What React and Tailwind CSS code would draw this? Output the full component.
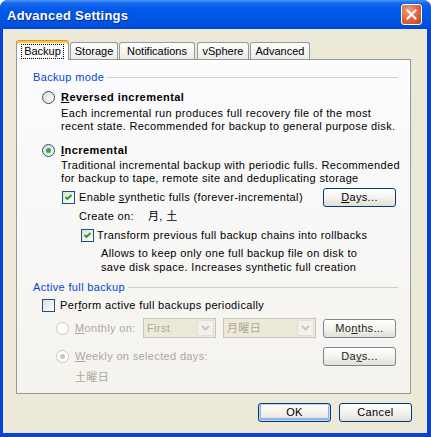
import React from 'react';

const font = "font-['Liberation_Sans','Noto_Sans_CJK_JP',sans-serif]";

const Radio = ({ checked, disabled }) => (
  <span
    className={`w-[13px] h-[13px] rounded-full border flex items-center justify-center shrink-0 ${
      disabled ? 'border-[#CAC8BB] bg-white' : 'border-[#1C5180] bg-linear-to-br from-[#DCDCD7] to-white'
    }`}
  >
    {checked && (
      <span className={`w-[5px] h-[5px] rounded-full ${disabled ? 'bg-[#CAC8BB]' : 'bg-[#36A936]'}`} />
    )}
  </span>
);

const Check = ({ checked }) => (
  <span className="w-[13px] h-[13px] border border-[#1C5180] bg-linear-to-br from-[#DCDCD7] to-white flex items-center justify-center shrink-0">
    {checked && (
      <svg width="9" height="9" viewBox="0 0 9 9">
        <path d="M1.5 4 L3.5 6 L7.5 2" stroke="#21A121" strokeWidth="1.8" fill="none" />
      </svg>
    )}
  </span>
);

const Btn = ({ children, border = 'border-[#003C74]', extra = '' }) => (
  <div
    className={`h-[19px] w-[73px] rounded-[3px] border ${border} bg-linear-to-b from-white via-[#F4F3EE] to-[#E2DFD4] flex items-center justify-center shrink-0 ${extra}`}
  >
    {children}
  </div>
);

const Combo = ({ value, width }) => (
  <div className={`${width} h-[20px] border border-[#C9C7BA] bg-[#ECE9D8] flex items-center justify-between pl-[3px] text-[#ACA899] shrink-0`}>
    <span>{value}</span>
    <span className="w-[17px] h-[16px] mr-[1px] bg-[#F2F1EC] border border-[#E2E0D6] rounded-[2px] flex items-center justify-center">
      <svg width="9" height="6" viewBox="0 0 9 6">
        <path d="M1 1 L4.5 4.5 L8 1" stroke="#C9C7BA" strokeWidth="2" fill="none" />
      </svg>
    </span>
  </div>
);

const Group = ({ label }) => (
  <div className="flex items-center ml-[16px] mr-[12px] h-[13px] text-[#0046D5]">
    <span>{label}</span>
    <span className="flex-1 h-px bg-[#D0D0BF] ml-[3px]" />
  </div>
);

const tabs = [
  { name: 'Storage', w: 'w-[48px]', ml: 'ml-[1px]' },
  { name: 'Notifications', w: 'w-[76px]', ml: 'ml-[1px]' },
  { name: 'vSphere', w: 'w-[52px]', ml: 'ml-[2px]' },
  { name: 'Advanced', w: 'w-[60px]', ml: 'ml-[1px]' },
];

export default function App() {
  return (
    <div className={`w-[431px] h-[437px] flex flex-col bg-[#0842D8] rounded-t-[8px] overflow-hidden text-[11px] leading-[13px] tracking-[0.35px] text-black ${font}`}>
      {/* Title bar */}
      <div className="h-[29px] shrink-0 flex items-center justify-between pl-[7px] pr-[9px] bg-[linear-gradient(to_bottom,#4C95F5_0%,#1466EE_12%,#0058E8_35%,#0054E3_80%,#0047D4_100%)]">
        <span className="text-white font-bold text-[13px] tracking-[0.25px] [text-shadow:1px_1px_0_#0A2A9C] pt-[2px]">Advanced Settings</span>
        <div className="w-[21px] h-[21px] rounded-[3px] border border-white bg-[radial-gradient(circle_at_35%_30%,#F0A285_0%,#DD6842_50%,#C2431E_100%)] flex items-center justify-center">
          <svg width="11" height="11" viewBox="0 0 11 11">
            <path d="M1.5 1.5 L9.5 9.5 M9.5 1.5 L1.5 9.5" stroke="white" strokeWidth="2" strokeLinecap="square" />
          </svg>
        </div>
      </div>

      {/* Client */}
      <div className="flex-1 ml-[3px] mr-[4px] mb-[4px] bg-[#ECE9D8] flex flex-col pt-[11px] pl-[13px]">
        {/* Tabs */}
        <div className="flex items-end h-[19px] tracking-normal">
          <div className="relative z-10 w-[53px] h-[20px] -mb-px rounded-t-[3px] border border-b-0 border-[#919B9C] border-t-[#E68B2C] shadow-[inset_0_2px_0_#FFC83C] bg-[#FCFCFE] flex justify-center pt-[3px]">
            <span className="border border-dotted border-black px-[2px] h-[15px] leading-[13px]">Backup</span>
          </div>
          {tabs.map((t) => (
            <div
              key={t.name}
              className={`${t.w} ${t.ml} h-[17px] rounded-t-[3px] border border-b-0 border-[#919B9C] bg-linear-to-b from-white to-[#ECEBE6] flex items-center justify-center pt-px`}
            >
              {t.name}
            </div>
          ))}
        </div>

        {/* Panel */}
        <div className="w-[395px] h-[335px] border border-[#919B9C] bg-linear-to-b from-[#FCFCFE] to-[#F4F3EE] flex flex-col">
          <div className="mt-[11px]">
            <Group label="Backup mode" />
          </div>

          <div className="flex items-center mt-[7px] ml-[25px] gap-[6px] font-bold tracking-[0.45px]">
            <Radio />
            <span>
              <u>R</u>eversed incremental
            </span>
          </div>
          <div className="mt-[3px] ml-[44px]">
            <div>Each incremental run produces full recovery file of the most</div>
            <div>recent state. Recommended for backup to general purpose disk.</div>
          </div>

          <div className="flex items-center mt-[11px] ml-[25px] gap-[6px] font-bold tracking-[0.45px]">
            <Radio checked />
            <span>
              <u>I</u>ncremental
            </span>
          </div>
          <div className="mt-[2px] ml-[44px]">
            <div>Traditional incremental backup with periodic fulls. Recommended</div>
            <div>for backup to tape, remote site and deduplicating storage</div>
          </div>

          <div className="flex items-center justify-between h-[19px] mt-[3px] ml-[45px] mr-[14px]">
            <div className="flex items-center gap-[4px]">
              <Check checked />
              <span>
                Enable <u>s</u>ynthetic fulls (forever-incremental)
              </span>
            </div>
            <Btn>
              <u>D</u>ays...
            </Btn>
          </div>

          <div className="flex mt-[3px] ml-[62px]">
            <span className="w-[69px]">Create on:</span>
            <span>月, 土</span>
          </div>

          <div className="flex items-center gap-[3px] mt-[6px] ml-[64px]">
            <Check checked />
            <span>Transform previous full backup chains into rollbacks</span>
          </div>
          <div className="mt-[4px] ml-[84px] leading-[14px]">
            <div>Allows to keep only one full backup file on disk to</div>
            <div>save disk space. Increases synthetic full creation</div>
          </div>

          <div className="mt-[7px]">
            <Group label="Active full backup" />
          </div>

          <div className="flex items-center gap-[5px] mt-[5px] ml-[25px]">
            <Check />
            <span>
              Per<u>f</u>orm active full backups periodically
            </span>
          </div>

          <div className="flex items-center h-[20px] mt-[6px] ml-[39px] mr-[14px] text-[#ACA899]">
            <Radio disabled />
            <span className="ml-[6px] w-[68px]">
              <u>M</u>onthly on:
            </span>
            <Combo value="First" width="w-[73px]" />
            <div className="ml-[7px]">
              <Combo value="月曜日" width="w-[93px]" />
            </div>
            <div className="ml-auto">
              <Btn border="border-[#7D8790]" extra="text-[#222]">
                Mo<u>n</u>ths...
              </Btn>
            </div>
          </div>

          <div className="flex items-center h-[19px] mt-[9px] ml-[39px] mr-[14px] text-[#ACA899]">
            <Radio checked disabled />
            <span className="ml-[6px]">
              <u>W</u>eekly on selected days:
            </span>
            <div className="ml-auto">
              <Btn border="border-[#7D8790]" extra="text-[#222]">
                Da<u>y</u>s...
              </Btn>
            </div>
          </div>

          <div className="mt-[5px] ml-[58px] text-[#ACA899]">土曜日</div>
        </div>

        {/* Dialog buttons */}
        <div className="flex justify-end gap-[8px] mt-[9px] pr-[15px]">
          <Btn extra="shadow-[inset_0_0_0_1px_#C2D6F7,inset_0_-1px_0_2px_#8EB2EC]">OK</Btn>
          <Btn>Cancel</Btn>
        </div>
      </div>
    </div>
  );
}
